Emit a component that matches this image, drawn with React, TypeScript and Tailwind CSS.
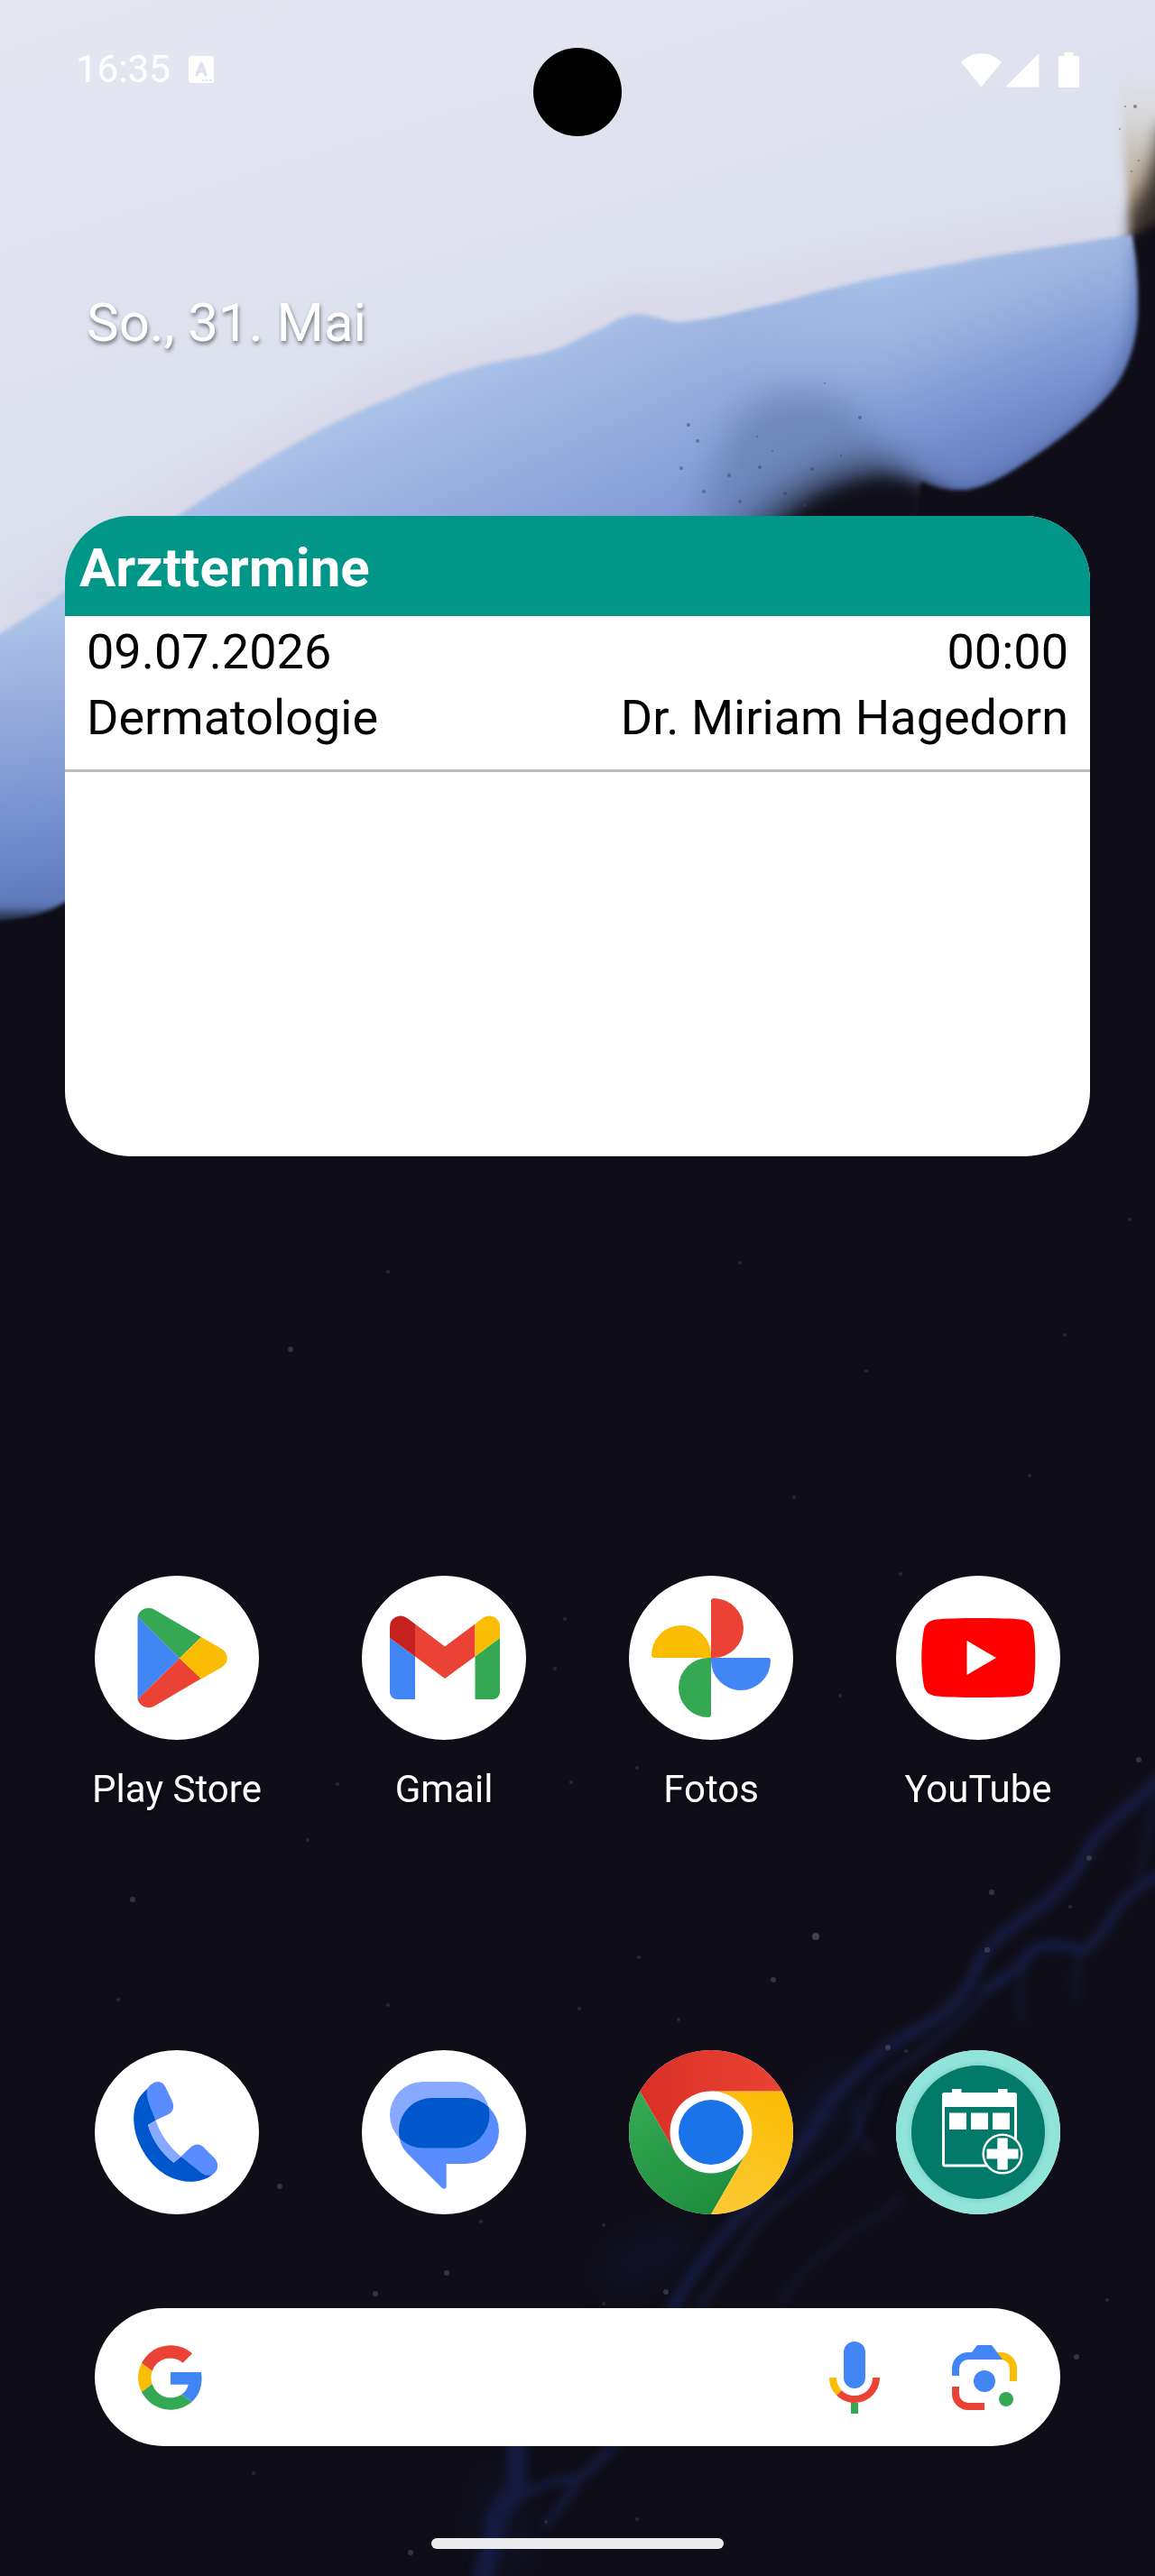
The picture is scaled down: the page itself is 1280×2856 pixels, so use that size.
import type { ReactNode } from "react";

const stars = [
  [322, 1496, 3], [1141, 1636, 2], [1044, 1994, 3], [706, 1960, 2], [904, 2147, 4],
  [147, 2106, 3], [1099, 2098, 3], [1094, 2162, 3], [857, 2195, 3], [374, 1978, 2],
  [341, 2040, 2], [131, 2217, 2], [310, 2424, 3], [495, 2520, 3], [416, 2543, 3],
  [533, 2463, 2], [669, 2467, 2], [1193, 2613, 3], [455, 2830, 3], [605, 2796, 2],
  [708, 2170, 2], [430, 2223, 2], [642, 2227, 2], [752, 2239, 2], [1207, 2060, 3],
  [1262, 1951, 3], [1186, 2114, 2], [984, 2270, 3], [738, 2541, 3], [669, 2554, 2],
  [626, 1795, 2], [615, 1850, 2], [633, 1976, 2], [931, 1880, 2], [998, 1745, 2],
  [706, 2793, 2], [281, 2742, 2], [1227, 2550, 2], [1004, 2274, 2], [1252, 1352, 2],
  [820, 1400, 2], [960, 1520, 2], [430, 1410, 2], [1180, 1480, 2], [880, 1660, 2],
];

const specks = [
  [763, 471, 2], [773, 489, 2], [839, 484, 1], [842, 518, 2], [914, 425, 1],
  [953, 463, 2], [755, 519, 2], [808, 527, 2], [870, 547, 2], [892, 560, 2],
  [856, 500, 1], [780, 545, 2], [932, 505, 1], [820, 556, 2], [900, 520, 2],
  [1247, 118, 1], [1241, 143, 1], [1254, 190, 1], [1262, 178, 1],
];

function Blur({ id, amount }: { id: string; amount: number }) {
  return (
    <filter id={id} x="-40%" y="-40%" width="180%" height="180%" colorInterpolationFilters="sRGB">
      <feGaussianBlur stdDeviation={amount} />
    </filter>
  );
}

function Wallpaper() {
  return (
    <svg
      className="absolute inset-0 h-full w-full"
      viewBox="0 0 1280 2856"
      preserveAspectRatio="none"
      aria-hidden="true"
    >
      <defs>
        <linearGradient id="sky" x1="0" y1="0" x2="0.5" y2="1">
          <stop offset="0" stopColor="#e5e8f3" />
          <stop offset="0.35" stopColor="#e0e3ef" />
          <stop offset="0.75" stopColor="#dbdfec" />
          <stop offset="1" stopColor="#d6d8e6" />
        </linearGradient>
        <linearGradient id="petal" gradientUnits="userSpaceOnUse" x1="480" y1="400" x2="680" y2="840">
          <stop offset="0" stopColor="#aec5e9" />
          <stop offset="0.25" stopColor="#9bb1e0" />
          <stop offset="0.6" stopColor="#7c98d4" />
          <stop offset="1" stopColor="#5872b6" />
        </linearGradient>
        <linearGradient id="petalLeft" gradientUnits="userSpaceOnUse" x1="0" y1="680" x2="40" y2="1020">
          <stop offset="0" stopColor="#aec5e9" />
          <stop offset="0.3" stopColor="#98addd" />
          <stop offset="0.65" stopColor="#7793d0" />
          <stop offset="1" stopColor="#5b76b8" />
        </linearGradient>
        <linearGradient id="petalRight" gradientUnits="userSpaceOnUse" x1="1020" y1="300" x2="1110" y2="540">
          <stop offset="0" stopColor="#a6bfe6" />
          <stop offset="0.25" stopColor="#9cb2e0" />
          <stop offset="0.6" stopColor="#7d98d3" />
          <stop offset="1" stopColor="#6279ba" />
        </linearGradient>
        <linearGradient id="fadeIn" gradientUnits="userSpaceOnUse" x1="800" y1="0" x2="980" y2="0">
          <stop offset="0" stopColor="#000" />
          <stop offset="1" stopColor="#fff" />
        </linearGradient>
        <mask id="rightMask" maskUnits="userSpaceOnUse" x="800" y="240" width="500" height="420">
          <rect x="800" y="240" width="500" height="420" fill="url(#fadeIn)" />
        </mask>
        <linearGradient id="rock" x1="0" y1="0" x2="0" y2="1">
          <stop offset="0" stopColor="#dedfe2" stopOpacity="0" />
          <stop offset="0.35" stopColor="#d3d2d0" />
          <stop offset="0.65" stopColor="#b9aa96" />
          <stop offset="0.9" stopColor="#8a7255" />
          <stop offset="1" stopColor="#2a241f" />
        </linearGradient>
        <Blur id="soft2" amount={2} />
        <Blur id="soft5" amount={5} />
        <Blur id="soft9" amount={9} />
        <Blur id="soft18" amount={18} />
        <clipPath id="petalShape">
          <path d="M-20 718L0 702C25 688 50 672 72 655C115 625 160 596 200 570C245 540 285 515 327 492C365 470 400 454 441 438C470 424 500 414 531 406C560 398 590 396 616 387C636 380 650 370 669 363C682 355 695 348 709 348C725 350 738 357 755 357C790 354 825 344 857 337C882 331 906 323 931 318C980 305 1030 298 1078 288C1136 277 1195 270 1254 260C1259 280 1261 310 1261 340C1261 370 1254 400 1238 425C1216 456 1180 483 1146 506C1116 526 1090 543 1064 543C1046 543 1032 538 1020 533L1000 640H860V1000H72C50 1014 20 1020 -20 1020Z" />
        </clipPath>
      </defs>

      <rect width="1280" height="2856" fill="#0f0e18" />
      <path d="M0 0H1280V262L1240 360L700 640H130L0 780Z" fill="url(#sky)" />
      <path
        d="M0 690L200 556L441 424L616 373L709 334L755 343L931 304L1250 246"
        fill="none"
        stroke="#d3cfe2"
        strokeWidth="34"
        opacity="0.6"
        filter="url(#soft18)"
      />

      {/* rock face on the right, behind the petal */}
      <path d="M1238 70C1242 130 1248 200 1255 275H1310V70Z" fill="url(#rock)" filter="url(#soft5)" />
      <path d="M1286 140C1278 190 1264 222 1254 236V300H1320V140Z" fill="#1c191c" opacity="0.8" filter="url(#soft9)" />
      <path d="M1252 264L1310 232V660H780L1000 480Z" fill="#0f0e18" filter="url(#soft5)" />

      <g filter="url(#soft2)">
        <g clipPath="url(#petalShape)">
          <rect x="-20" y="240" width="1320" height="800" fill="url(#petal)" />
          <rect x="-20" y="640" width="110" height="400" fill="url(#petalLeft)" />
          <rect x="800" y="240" width="480" height="420" fill="url(#petalRight)" mask="url(#rightMask)" />
          <path d="M1268 270C1274 400 1240 450 1170 500C1130 535 1090 556 1040 552" fill="none" stroke="#4b63a3" strokeWidth="20" opacity="0.7" filter="url(#soft9)" />
          <path d="M770 640C780 540 800 480 830 450C870 420 930 430 960 470C990 505 1020 535 1040 560V640Z" fill="#6078a8" opacity="0.6" filter="url(#soft18)" />
          <path d="M800 620C850 550 920 515 975 512C1000 522 1030 545 1060 575V660H780Z" fill="#1a1e2c" opacity="0.7" filter="url(#soft18)" />
          <path d="M850 600C880 560 925 538 970 530C995 526 1015 534 1050 552V660H820Z" fill="#100f19" filter="url(#soft9)" />
          <rect x="-30" y="1010" width="120" height="40" fill="#2b3657" filter="url(#soft5)" />
        </g>
      </g>
      <g fill="#39415a" opacity="0.5">
        {specks.map(([x, y, r]) => (
          <circle key={`${x}-${y}`} cx={x} cy={y} r={r} />
        ))}
      </g>
      <circle cx="1258" cy="118" r="2" fill="#85858c" />

      {/* faint blue veins in the lower half */}
      <g fill="none" stroke="#171e48" strokeLinecap="round" strokeLinejoin="round" filter="url(#soft5)">
        <path d="M1290 1966C1262 1996 1236 2014 1208 2046C1194 2082 1162 2110 1135 2126C1110 2146 1092 2160 1086 2174C1076 2196 1072 2206 1061 2217C1040 2240 1014 2252 988 2266C962 2286 938 2308 922 2327C904 2356 880 2396 857 2418C844 2436 828 2450 816 2461C796 2484 766 2520 745 2560" strokeWidth="14" opacity="0.75" />
        <path d="M1290 2075C1270 2086 1252 2100 1241 2113C1228 2130 1222 2150 1200 2162C1180 2158 1162 2152 1143 2162C1126 2186 1110 2196 1094 2205" strokeWidth="11" opacity="0.8" />
        <path d="M1094 2205C1080 2220 1076 2232 1061 2240C1030 2270 1000 2290 970 2310C960 2340 950 2364 940 2380C920 2400 900 2416 880 2430C856 2450 842 2462 830 2480C814 2510 790 2530 775 2560" strokeWidth="8" opacity="0.6" />
        <path d="M1200 2162C1192 2182 1190 2200 1194 2214M1143 2162C1130 2190 1126 2214 1134 2240M1280 1990C1272 2030 1270 2050 1262 2080" strokeWidth="8" opacity="0.4" />
        <path d="M996 2437C976 2458 966 2462 950 2470C934 2480 924 2490 914 2498C896 2514 880 2530 865 2552" strokeWidth="6" opacity="0.5" />
        <path d="M950 2330C946 2350 952 2370 964 2385" strokeWidth="6" opacity="0.6" />
        <path d="M573 2700C570 2720 576 2745 570 2765C552 2780 546 2800 548 2815C540 2835 534 2850 534 2880" strokeWidth="22" opacity="0.85" />
        <path d="M680 2712C664 2728 652 2744 637 2748C614 2748 596 2758 580 2766M640 2748C632 2772 612 2784 606 2800" strokeWidth="9" opacity="0.8" />
      </g>
      <g fill="#151b40" filter="url(#soft18)" opacity="0.4">
        <ellipse cx="720" cy="2500" rx="60" ry="22" transform="rotate(-24 720 2500)" />
        <ellipse cx="900" cy="2350" rx="70" ry="22" transform="rotate(-48 900 2350)" />
        <ellipse cx="556" cy="2800" rx="26" ry="60" />
      </g>
      <g fill="#8d8f9c">
        {stars.map(([x, y, r]) => (
          <circle key={`${x}-${y}`} cx={x} cy={y} r={r} opacity={r * 0.1} />
        ))}
      </g>
    </svg>
  );
}

function AppGlyph({ children }: { children: ReactNode }) {
  return (
    <svg viewBox="0 0 182 182" className="size-[182px]" aria-hidden="true">
      <circle cx="91" cy="91" r="91" fill="#fff" />
      {children}
    </svg>
  );
}

function PlayStoreIcon() {
  return (
    <AppGlyph>
      <path d="M47.5 45L94 91.5L47.5 137Z" fill="#4285f4" />
      <path d="M47.5 45C50 37 59 33 67 38L118 68L94 91.5Z" fill="#34a853" />
      <path d="M47.5 137C50 145 59 149 67 144L118 114L94 91.5Z" fill="#ea4335" />
      <path d="M118 68L139 80C149.5 86 149.5 97 139 102.5L118 114.5L94 91.5Z" fill="#fbbc04" />
    </AppGlyph>
  );
}

function GmailIcon() {
  return (
    <AppGlyph>
      <path d="M31 69V129A8 8 0 0 0 39 137H59V89.5Z" fill="#4285f4" />
      <path d="M153 69V129A8 8 0 0 1 145 137H125.5V89.5Z" fill="#34a853" />
      <path d="M59 53.5L92 78.5L125.5 53.5V89.5L92 114L59 89.5Z" fill="#ea4335" />
      <path d="M31 69V57A12 12 0 0 1 50.5 47.2L59 53.5V89.5Z" fill="#c5221f" />
      <path d="M153 69V57A12 12 0 0 0 133.5 47.2L125.5 53.5V89.5Z" fill="#fbbc04" />
    </AppGlyph>
  );
}

function PhotosIcon() {
  return (
    <AppGlyph>
      <path d="M91 91V28Q91 25 94 25A33 33 0 0 1 94 91Z" fill="#ea4335" />
      <path d="M91 91H154Q157 91 157 94A33 33 0 0 1 91 94Z" fill="#4285f4" />
      <path d="M91 91V154Q91 157 88 157A33 33 0 0 1 88 91Z" fill="#34a853" />
      <path d="M91 91H28Q25 91 25 88A33 33 0 0 1 91 88Z" fill="#fbbc04" />
    </AppGlyph>
  );
}

function YouTubeIcon() {
  return (
    <AppGlyph>
      <path
        d="M45 48.5C60 46.5 122 46.5 138 48.5C147 49.5 151.5 54 152.5 62C155 80 155 102 152.5 120C151.5 128 147 132.5 138 133.5C122 135.5 60 135.5 45 133.5C36 132.5 31.5 128 30.5 120C27.5 102 27.5 80 30.5 62C31.5 54 36 49.5 45 48.5Z"
        fill="#f00"
      />
      <path d="M78.5 72V110L111 91Z" fill="#fff" />
    </AppGlyph>
  );
}

function PhoneIcon() {
  return (
    <AppGlyph>
      <path d="M58 43C46 53 42 66 43.5 82C46 106 62 130 82 140C98 148 118 148 130.5 138L95.5 118L87.5 124.7C74 114 64 100 59 83L67.5 77.7Z" fill="#0057cc" />
      <path d="M67.5 77.7L59 83C64 100 74 114 87.5 124.7L95.5 118C83 107 73 94 67.5 77.7Z" fill="#87a9ff" />
      <path d="M58 43C61 38 66 35 70 35C74 35 76.5 37 78.5 41L86 57C88.5 63 87 68 82 71L67.5 77.7C63 66 56 53 58 43Z" fill="#598cff" />
      <path d="M95.5 118L107 107C111 103.5 116 103.5 120 107L133 120C138 126 137 134 130.5 138C126 139.5 122 139 118 136Z" fill="#598cff" />
    </AppGlyph>
  );
}

function MessagesIcon() {
  return (
    <AppGlyph>
      <defs>
        <clipPath id="backBubble">
          <rect x="31" y="35" width="110.5" height="73.5" rx="36.7" />
        </clipPath>
      </defs>
      <rect x="31" y="35" width="110.5" height="73.5" rx="36.7" fill="#87a9ff" />
      <path
        d="M78 53H115.5A36.5 36.5 0 0 1 115.5 126H93.7V151Q93.5 155 89 153L51 115C44 108 41 99 41 90A37 37 0 0 1 78 53Z"
        fill="#598cff"
      />
      <rect x="41" y="53" width="111" height="73" rx="36.5" fill="#0057cc" clipPath="url(#backBubble)" />
    </AppGlyph>
  );
}

function ChromeIcon() {
  return (
    <AppGlyph>
      <defs>
        <linearGradient id="chromeRed" x1="0" x2="1">
          <stop offset="0" stopColor="#d93025" />
          <stop offset="1" stopColor="#ea4335" />
        </linearGradient>
        <linearGradient id="chromeYellow" x1="0.3" y1="1" x2="0.7" y2="0">
          <stop offset="0" stopColor="#fcc934" />
          <stop offset="1" stopColor="#fbbc04" />
        </linearGradient>
        <linearGradient id="chromeGreen" x1="0.7" y1="1" x2="0.2" y2="0">
          <stop offset="0" stopColor="#1e8e3e" />
          <stop offset="1" stopColor="#34a853" />
        </linearGradient>
      </defs>
      <path d="M91 182A91 91 0 0 1 12.2 45.5L51.6 113.7L91 136.5L130.4 113.7Z" fill="url(#chromeGreen)" />
      <path d="M91 182A91 91 0 0 0 169.8 45.5H91L130.4 113.7Z" fill="url(#chromeYellow)" />
      <path d="M12.2 45.5A91 91 0 0 1 169.8 45.5H91L51.6 113.7Z" fill="url(#chromeRed)" />
      <circle cx="91" cy="91" r="45.5" fill="#fff" />
      <circle cx="91" cy="91" r="36" fill="#1a73e8" />
    </AppGlyph>
  );
}

function AppointmentsIcon() {
  return (
    <AppGlyph>
      <defs>
        <radialGradient id="ring">
          <stop offset="0.81" stopColor="#86d8cd" />
          <stop offset="0.88" stopColor="#91e4da" />
        </radialGradient>
      </defs>
      <circle cx="91" cy="91" r="91" fill="url(#ring)" />
      <circle cx="91" cy="91" r="74" fill="#027a6a" />
      <rect x="52.5" y="48.5" width="80" height="79.5" rx="2" fill="none" stroke="#fff" strokeWidth="3" />
      <path d="M51 63V50Q51 47 54 47H62V43H72.5V47H113V43H123.5V47H131Q134 47 134 50V63Z" fill="#fff" />
      <path d="M59 69.5H78V88H59ZM83 69.5H102V88H83ZM107 69.5H126V88H107Z" fill="#fff" />
      <circle cx="118" cy="115" r="21.3" fill="#027a6a" stroke="#fff" strokeWidth="2.5" />
      <path d="M112.3 97.5H123.7V109.5H135.5V120.5H123.7V132.5H112.3V120.5H100.5V109.5H112.3Z" fill="#fff" />
    </AppGlyph>
  );
}

function GoogleLogo() {
  return (
    <svg viewBox="0 0 216 216" className="size-[72px]" aria-hidden="true">
      <path d="M180 28L149 59A64 65 0 0 0 47 86L12 60A108 108 0 0 1 180 28Z" fill="#ea4335" />
      <path d="M12 60L47 86A66 66 0 0 0 47 130L12 156A108 108 0 0 1 12 60Z" fill="#fbbc04" />
      <path d="M12 156L47 130A65 65 0 0 0 145 164L179 189A108 108 0 0 1 12 156Z" fill="#34a853" />
      <path d="M108 90H210C216 130 206 164 179 189L145 164C157 155 164 145 167 131H108Z" fill="#4285f4" />
    </svg>
  );
}

function MicIcon() {
  return (
    <svg viewBox="0 0 56 80" className="h-20 w-14" fill="none" aria-hidden="true">
      <rect x="16" y="0" width="24" height="52" rx="12" fill="#4285f4" />
      <path d="M4 40A24 24 0 0 0 11 57" stroke="#fbbc04" strokeWidth="8" />
      <path d="M11 57A24 24 0 0 0 52 40" stroke="#ea4335" strokeWidth="8" />
      <path d="M28 68V80" stroke="#34a853" strokeWidth="8" />
    </svg>
  );
}

function LensIcon() {
  return (
    <svg viewBox="0 0 72 72" className="size-[72px]" fill="none" aria-hidden="true">
      <path d="M50 12H54A14 14 0 0 1 68 26V40" stroke="#fbbc04" strokeWidth="8" />
      <path d="M4 34V26A14 14 0 0 1 18 12H50" stroke="#4285f4" strokeWidth="8" />
      <path d="M28 0H44L56 16H16L22 8Z" fill="#4285f4" />
      <path d="M4 46V54A14 14 0 0 0 18 68H36" stroke="#ea4335" strokeWidth="8" />
      <circle cx="36" cy="40" r="12" fill="#4285f4" />
      <circle cx="60" cy="60" r="8" fill="#34a853" />
    </svg>
  );
}

const apps = [
  { name: "Play Store", Icon: PlayStoreIcon },
  { name: "Gmail", Icon: GmailIcon },
  { name: "Fotos", Icon: PhotosIcon },
  { name: "YouTube", Icon: YouTubeIcon },
];

const dock = [
  { name: "Telefon", Icon: PhoneIcon },
  { name: "Messages", Icon: MessagesIcon },
  { name: "Chrome", Icon: ChromeIcon },
  { name: "Arzttermine", Icon: AppointmentsIcon },
];

const appointments = [
  { date: "09.07.2026", time: "00:00", subject: "Dermatologie", doctor: "Dr. Miriam Hagedorn" },
];

function StatusBar() {
  return (
    <header className="grid grid-cols-[1fr_98px_1fr] items-start px-[84px] pt-[53px] text-white">
      <div className="flex h-12 items-center gap-5">
        <time className="text-[42px] leading-[48px]">16:35</time>
        <svg viewBox="0 0 28 30" className="h-[30px] w-7" aria-hidden="true">
          <rect width="28" height="30" rx="3" fill="#fff" />
          <path d="M9 21L14 8.5L19 21M10.5 17H17.5" fill="none" stroke="#dfe2ee" strokeWidth="3.5" strokeLinecap="round" strokeLinejoin="round" />
          <path d="M15 27H17.5M19 27H21.5M23.5 27H26" stroke="#dfe2ee" strokeWidth="2" />
        </svg>
      </div>
      <div className="size-[98px] rounded-full bg-black" />
      <div className="flex h-12 items-center justify-end">
        <svg viewBox="0 0 131 39" className="h-[39px] w-[131px]" fill="#fff" aria-hidden="true">
          <path d="M0 11C13 -2 32 -2 45 11L22.5 38.5Z" />
          <path d="M49 38.5H86.5V1Z" />
          <path d="M114.5 0H124.5V4H129Q131 4 131 6V37Q131 39 129 39H110Q108 39 108 37V6Q108 4 110 4H114.5Z" />
        </svg>
      </div>
    </header>
  );
}

export default function App() {
  return (
    <main className="relative isolate flex min-h-screen flex-col overflow-hidden bg-[#0f0e18] font-['Roboto',sans-serif]">
      <div className="absolute inset-0 -z-10">
        <Wallpaper />
      </div>

      <StatusBar />

      <p className="mt-[171px] px-24 text-[60px] leading-[72px] text-white [text-shadow:1px_3px_4px_rgba(0,0,0,0.5)]">
        So., 31. Mai
      </p>

      <section className="mx-[72px] mt-[178px] min-h-[710px] overflow-hidden rounded-[72px] bg-white text-black">
        <h1 className="bg-[#009688] px-4 pt-[22px] pb-[17px] text-[60px] leading-[72px] font-bold text-white">
          Arzttermine
        </h1>
        <ul className="text-[54px] leading-[73px]">
          {appointments.map(({ date, time, subject, doctor }) => (
            <li key={date} className="border-b-3 border-[#bdbdbd] px-6 pt-[3px] pb-[21px]">
              <div className="flex justify-between">
                <span>{date}</span>
                <span>{time}</span>
              </div>
              <div className="flex justify-between">
                <span>{subject}</span>
                <span>{doctor}</span>
              </div>
            </li>
          ))}
        </ul>
      </section>

      <div className="flex-1" />

      <nav className="grid grid-cols-4 px-12">
        {apps.map(({ name, Icon }) => (
          <a
            key={name}
            href="#"
            className="flex flex-col items-center gap-[31px] text-[42px] leading-[48px] text-white [text-shadow:1px_2px_3px_rgba(0,0,0,0.6)]"
          >
            <Icon />
            {name}
          </a>
        ))}
      </nav>

      <nav className="mt-[265px] grid grid-cols-4 px-12">
        {dock.map(({ name, Icon }) => (
          <a key={name} href="#" aria-label={name} className="flex justify-center">
            <Icon />
          </a>
        ))}
      </nav>

      <form role="search" className="mx-[105px] mt-[104px] flex h-[153px] items-center rounded-full bg-white px-12">
        <GoogleLogo />
        <input
          type="text"
          aria-label="Google-Suche"
          className="mx-6 min-w-0 flex-1 bg-transparent text-[42px] outline-none"
        />
        <button type="button" aria-label="Sprachsuche">
          <MicIcon />
        </button>
        <button type="button" aria-label="Google Lens" className="ml-20">
          <LensIcon />
        </button>
      </form>

      <div className="mt-[102px] mb-[30px] h-3 w-[324px] self-center rounded-full bg-[#ececee]" />
    </main>
  );
}
